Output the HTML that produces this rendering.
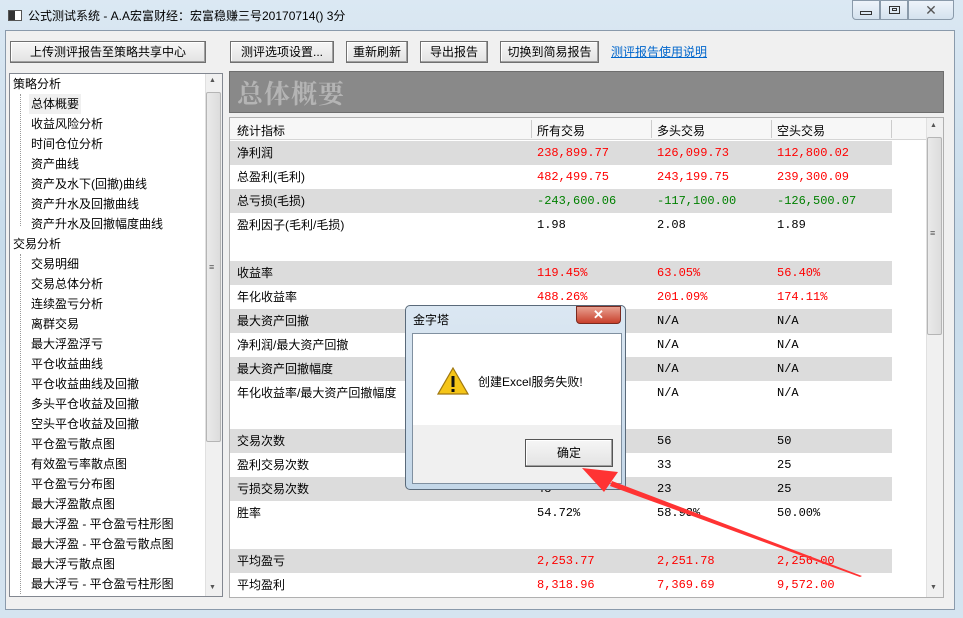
<!DOCTYPE html>
<html><head><meta charset="utf-8"><style>
*{margin:0;padding:0;box-sizing:border-box}
body{width:963px;height:618px;overflow:hidden;background:#c9dcec;font-family:"Liberation Sans","Noto Sans CJK SC",sans-serif;font-size:12px;color:#000;position:relative}
.abs{position:absolute}
.frame{left:0;top:0;width:963px;height:618px;background:linear-gradient(180deg,#dbe8f3,#c7dbea 40%,#d5e4f0)}
.client{left:5px;top:30px;width:950px;height:580px;background:#f0f0f0;border:1px solid #8a9aab}
.btn{position:absolute;height:22px;background:linear-gradient(#f6f6f6,#e3e3e3);border:1px solid #707070;box-shadow:inset -1px -1px 0 #a0a0a0,inset 1px 1px 0 #fff;text-align:center;line-height:20px;font-size:12px}
.tree{left:9px;top:73px;width:214px;height:524px;background:#fff;border:1px solid #828790}
.ti{position:absolute;height:20px;line-height:20px;font-size:12px;white-space:nowrap}
.vs{position:absolute;background:#f0f0f0;border-left:1px solid #e0e0e0}
.row{position:absolute;left:230px;width:662px;height:24px}
.g{background:#dcdcdc}
.c{position:absolute;top:0;line-height:24px;font-size:12px;white-space:nowrap}
.m{font-family:"Liberation Mono","Noto Sans CJK SC",monospace;font-size:12px}
.r{color:#f00}.gr{color:#008000}
.cap{position:absolute;top:0;height:20px;border:1px solid #8a9aaa;background:linear-gradient(#eef4fa,#d4e2ee)}
</style></head><body>
<div class="abs frame"></div>
<div class="abs" style="left:8px;top:10px;width:14px;height:11px;background:#fff;border:1px solid #555"><div style="width:6px;height:9px;background:#333"></div></div>
<div class="abs" style="left:28px;top:7px;font-size:12px">公式测试系统 - A.A宏富财经：宏富稳赚三号20170714() 3分</div>
<div class="cap" style="left:852px;width:28px;border-radius:0 0 0 4px"><div style="margin:10px auto 0;width:12px;height:4px;border:1px solid #333"></div></div>
<div class="cap" style="left:880px;width:28px"><div style="margin:5px auto 0;width:11px;height:8px;border:1px solid #333"><div style="margin:1px auto;width:5px;height:3px;border:1px solid #333"></div></div></div>
<div class="cap" style="left:908px;width:46px;border-radius:0 0 4px 0;text-align:center;font-size:14px;color:#555;line-height:18px">✕</div>
<div class="abs client"></div>
<div class="btn" style="left:10px;top:41px;width:196px">上传测评报告至策略共享中心</div>
<div class="btn" style="left:230px;top:41px;width:104px">测评选项设置...</div>
<div class="btn" style="left:346px;top:41px;width:62px">重新刷新</div>
<div class="btn" style="left:420px;top:41px;width:68px">导出报告</div>
<div class="btn" style="left:500px;top:41px;width:99px">切换到简易报告</div>
<div class="abs" style="left:611px;top:43px;color:#0066cc;text-decoration:underline">测评报告使用说明</div>
<div class="abs tree"></div>
<div class="vs" style="left:205px;top:74px;width:17px;height:522px"></div>
<div class="abs" style="left:206px;top:92px;width:15px;height:350px;background:linear-gradient(90deg,#eaeaea,#dcdcdc);border:1px solid #b5b5b5;border-radius:2px"></div>
<div class="abs" style="left:209px;top:262px;font-size:9px;color:#555">≡</div>
<div class="abs" style="left:209px;top:77px;font-size:7px;color:#555">▲</div>
<div class="abs" style="left:209px;top:584px;font-size:7px;color:#555">▼</div>
<div class="abs" style="left:20px;top:94px;width:0;height:132px;border-left:1px dotted #999"></div>
<div class="abs" style="left:20px;top:254px;width:0;height:340px;border-left:1px dotted #999"></div>
<div class="ti" style="left:13px;top:74px">策略分析</div>
<div class="ti" style="left:29px;top:94px;background:#f0f0f0;padding:0 2px">总体概要</div>
<div class="ti" style="left:31px;top:114px">收益风险分析</div>
<div class="ti" style="left:31px;top:134px">时间仓位分析</div>
<div class="ti" style="left:31px;top:154px">资产曲线</div>
<div class="ti" style="left:31px;top:174px">资产及水下(回撤)曲线</div>
<div class="ti" style="left:31px;top:194px">资产升水及回撤曲线</div>
<div class="ti" style="left:31px;top:214px">资产升水及回撤幅度曲线</div>
<div class="ti" style="left:13px;top:234px">交易分析</div>
<div class="ti" style="left:31px;top:254px">交易明细</div>
<div class="ti" style="left:31px;top:274px">交易总体分析</div>
<div class="ti" style="left:31px;top:294px">连续盈亏分析</div>
<div class="ti" style="left:31px;top:314px">离群交易</div>
<div class="ti" style="left:31px;top:334px">最大浮盈浮亏</div>
<div class="ti" style="left:31px;top:354px">平仓收益曲线</div>
<div class="ti" style="left:31px;top:374px">平仓收益曲线及回撤</div>
<div class="ti" style="left:31px;top:394px">多头平仓收益及回撤</div>
<div class="ti" style="left:31px;top:414px">空头平仓收益及回撤</div>
<div class="ti" style="left:31px;top:434px">平仓盈亏散点图</div>
<div class="ti" style="left:31px;top:454px">有效盈亏率散点图</div>
<div class="ti" style="left:31px;top:474px">平仓盈亏分布图</div>
<div class="ti" style="left:31px;top:494px">最大浮盈散点图</div>
<div class="ti" style="left:31px;top:514px">最大浮盈 - 平仓盈亏柱形图</div>
<div class="ti" style="left:31px;top:534px">最大浮盈 - 平仓盈亏散点图</div>
<div class="ti" style="left:31px;top:554px">最大浮亏散点图</div>
<div class="ti" style="left:31px;top:574px">最大浮亏 - 平仓盈亏柱形图</div>
<div class="abs" style="left:229px;top:71px;width:715px;height:42px;background:#898989;border:1px solid #6e6e6e"></div>
<div class="abs" style="left:237px;top:74px;font-size:26px;color:#b4b4b4;font-family:'Noto Serif CJK SC','Liberation Serif',serif;font-weight:bold;letter-spacing:1px">总体概要</div>
<div class="abs" style="left:229px;top:117px;width:715px;height:481px;background:#fff;border:1px solid #b0b0b0"></div>
<div class="abs" style="left:230px;top:118px;width:696px;height:22px;background:#f7f7f7;border-bottom:1px solid #d5d5d5"></div>
<div class="abs" style="left:237px;top:122px">统计指标</div>
<div class="abs" style="left:531px;top:120px;height:18px;border-left:1px solid #ccc"></div>
<div class="abs" style="left:537px;top:122px">所有交易</div>
<div class="abs" style="left:651px;top:120px;height:18px;border-left:1px solid #ccc"></div>
<div class="abs" style="left:657px;top:122px">多头交易</div>
<div class="abs" style="left:771px;top:120px;height:18px;border-left:1px solid #ccc"></div>
<div class="abs" style="left:777px;top:122px">空头交易</div>
<div class="abs" style="left:891px;top:120px;height:18px;border-left:1px solid #ccc"></div>
<div class="vs" style="left:926px;top:118px;width:17px;height:479px"></div>
<div class="abs" style="left:927px;top:137px;width:15px;height:198px;background:linear-gradient(90deg,#eaeaea,#dcdcdc);border:1px solid #b5b5b5;border-radius:2px"></div>
<div class="abs" style="left:930px;top:228px;font-size:9px;color:#555">≡</div>
<div class="abs" style="left:930px;top:122px;font-size:7px;color:#555">▲</div>
<div class="abs" style="left:930px;top:584px;font-size:7px;color:#555">▼</div>

<div class="row g" style="top:141px"><span class="c" style="left:7px">净利润</span><span class="c m r" style="left:307px">238,899.77</span><span class="c m r" style="left:427px">126,099.73</span><span class="c m r" style="left:547px">112,800.02</span></div>
<div class="row" style="top:165px"><span class="c" style="left:7px">总盈利(毛利)</span><span class="c m r" style="left:307px">482,499.75</span><span class="c m r" style="left:427px">243,199.75</span><span class="c m r" style="left:547px">239,300.09</span></div>
<div class="row g" style="top:189px"><span class="c" style="left:7px">总亏损(毛损)</span><span class="c m gr" style="left:307px">-243,600.06</span><span class="c m gr" style="left:427px">-117,100.00</span><span class="c m gr" style="left:547px">-126,500.07</span></div>
<div class="row" style="top:213px"><span class="c" style="left:7px">盈利因子(毛利/毛损)</span><span class="c m" style="left:307px">1.98</span><span class="c m" style="left:427px">2.08</span><span class="c m" style="left:547px">1.89</span></div>
<div class="row g" style="top:261px"><span class="c" style="left:7px">收益率</span><span class="c m r" style="left:307px">119.45%</span><span class="c m r" style="left:427px">63.05%</span><span class="c m r" style="left:547px">56.40%</span></div>
<div class="row" style="top:285px"><span class="c" style="left:7px">年化收益率</span><span class="c m r" style="left:307px">488.26%</span><span class="c m r" style="left:427px">201.09%</span><span class="c m r" style="left:547px">174.11%</span></div>
<div class="row g" style="top:309px"><span class="c" style="left:7px">最大资产回撤</span><span class="c m" style="left:427px">N/A</span><span class="c m" style="left:547px">N/A</span></div>
<div class="row" style="top:333px"><span class="c" style="left:7px">净利润/最大资产回撤</span><span class="c m" style="left:427px">N/A</span><span class="c m" style="left:547px">N/A</span></div>
<div class="row g" style="top:357px"><span class="c" style="left:7px">最大资产回撤幅度</span><span class="c m" style="left:427px">N/A</span><span class="c m" style="left:547px">N/A</span></div>
<div class="row" style="top:381px"><span class="c" style="left:7px">年化收益率/最大资产回撤幅度</span><span class="c m" style="left:427px">N/A</span><span class="c m" style="left:547px">N/A</span></div>
<div class="row g" style="top:429px"><span class="c" style="left:7px">交易次数</span><span class="c m" style="left:427px">56</span><span class="c m" style="left:547px">50</span></div>
<div class="row" style="top:453px"><span class="c" style="left:7px">盈利交易次数</span><span class="c m" style="left:427px">33</span><span class="c m" style="left:547px">25</span></div>
<div class="row g" style="top:477px"><span class="c" style="left:7px">亏损交易次数</span><span class="c m" style="left:307px">48</span><span class="c m" style="left:427px">23</span><span class="c m" style="left:547px">25</span></div>
<div class="row" style="top:501px"><span class="c" style="left:7px">胜率</span><span class="c m" style="left:307px">54.72%</span><span class="c m" style="left:427px">58.93%</span><span class="c m" style="left:547px">50.00%</span></div>
<div class="row g" style="top:549px"><span class="c" style="left:7px">平均盈亏</span><span class="c m r" style="left:307px">2,253.77</span><span class="c m r" style="left:427px">2,251.78</span><span class="c m r" style="left:547px">2,256.00</span></div>
<div class="row" style="top:573px"><span class="c" style="left:7px">平均盈利</span><span class="c m r" style="left:307px">8,318.96</span><span class="c m r" style="left:427px">7,369.69</span><span class="c m r" style="left:547px">9,572.00</span></div>

<div class="abs" style="left:405px;top:305px;width:221px;height:185px;background:linear-gradient(#dbe7f2,#c4d7e8);border:1px solid #5a6a7a;border-radius:5px"></div>
<div class="abs" style="left:413px;top:311px">金字塔</div>
<div class="abs" style="left:576px;top:306px;width:45px;height:18px;background:linear-gradient(#e8a090,#c8402c);border:1px solid #7a2a20;border-radius:0 0 4px 4px;color:#fff;text-align:center;font-weight:bold;font-size:13px;line-height:16px">✕</div>
<div class="abs" style="left:412px;top:333px;width:210px;height:151px;background:#f0f0f0;border:1px solid #8090a0"></div>
<div class="abs" style="left:413px;top:334px;width:208px;height:91px;background:#fff"></div>
<svg class="abs" style="left:437px;top:367px" width="32" height="28" viewBox="0 0 32 28"><path d="M16 1 L31 27 L1 27 Z" fill="#f5c518" stroke="#a07810" stroke-width="1.2"/><rect x="14.5" y="9" width="3" height="11" fill="#111"/><rect x="14.5" y="22" width="3" height="3" fill="#111"/></svg>
<div class="abs" style="left:478px;top:373px">创建Excel服务失败!</div>
<div class="btn" style="left:525px;top:439px;width:88px;height:28px;line-height:26px;border-color:#555">确定</div>
<svg class="abs" style="left:0;top:0" width="963" height="618"><polygon points="862,576 612,481 610,486 860,577" fill="#f33"/><polygon points="582,468 618,472 604,492" fill="#f33"/></svg>
</body></html>
